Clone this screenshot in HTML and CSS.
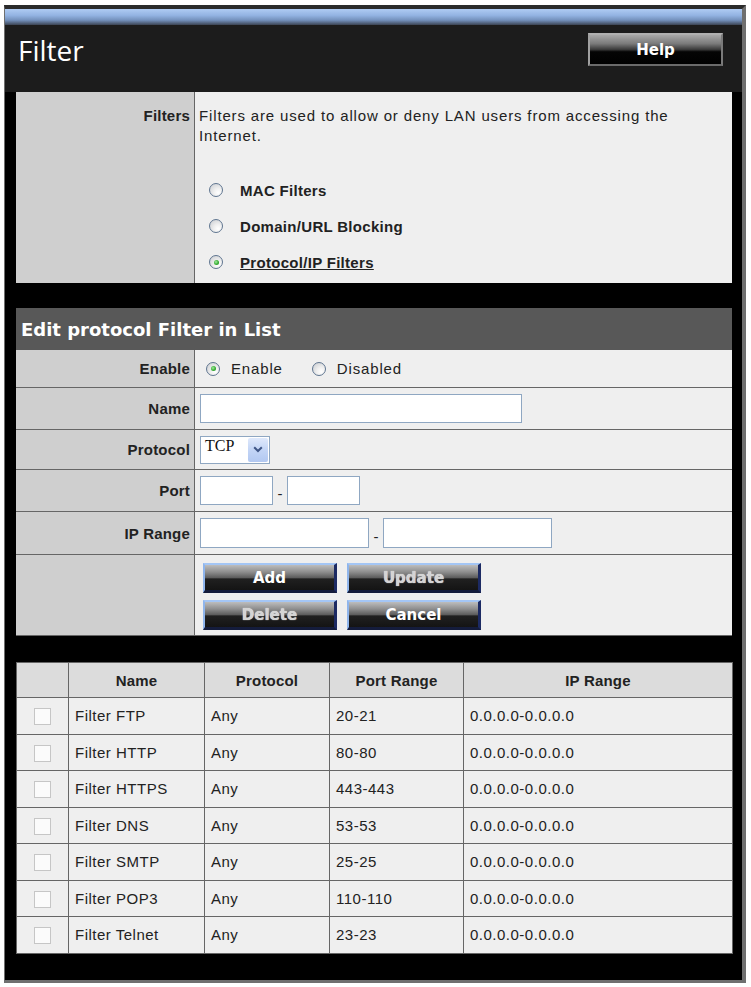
FILE: index.html
```html
<!DOCTYPE html>
<html lang="en">
<head>
<meta charset="utf-8">
<title>Filter</title>
<link rel="stylesheet" href="styles.css">
</head>
<body>
<div class="frame">
  <div class="topbar"></div>
  <div class="header">
    <h1 class="title">Filter</h1>
    <button class="help" type="button">Help</button>
  </div>
  <div class="content">
    <div class="panel">
      <div class="row row-filters">
        <div class="label label-top">Filters</div>
        <div class="value value-filters">
          <p class="desc">Filters are used to allow or deny LAN users from accessing the Internet.</p>
          <ul class="filter-list">
            <li class="radio-item"><span class="radio"></span><span class="opt">MAC Filters</span></li>
            <li class="radio-item"><span class="radio"></span><span class="opt">Domain/URL Blocking</span></li>
            <li class="radio-item"><span class="radio on"></span><a class="opt link" href="#">Protocol/IP Filters</a></li>
          </ul>
        </div>
      </div>
    </div>

    <div class="panel edit">
      <div class="heading">Edit protocol Filter in List</div>
      <div class="row row-enable">
        <div class="label">Enable</div>
        <div class="value">
          <label class="choice"><span class="radio on"></span>Enable</label>
          <label class="choice"><span class="radio"></span>Disabled</label>
        </div>
      </div>
      <div class="row row-name">
        <div class="label">Name</div>
        <div class="value"><input class="field w-name" type="text"></div>
      </div>
      <div class="row row-protocol">
        <div class="label">Protocol</div>
        <div class="value">
          <div class="select">
            <span class="select-text">TCP</span>
            <span class="select-btn">
              <svg width="10" height="7" viewBox="0 0 10 7"><path d="M1.2 1.2 L5 5 L8.8 1.2" fill="none" stroke="#3f5686" stroke-width="2"/></svg>
            </span>
          </div>
        </div>
      </div>
      <div class="row row-port">
        <div class="label">Port</div>
        <div class="value">
          <input class="field w-port" type="text"><span class="dash">-</span><input class="field w-port" type="text">
        </div>
      </div>
      <div class="row row-ip">
        <div class="label">IP Range</div>
        <div class="value">
          <input class="field w-ip" type="text"><span class="dash">-</span><input class="field w-ip" type="text">
        </div>
      </div>
      <div class="row row-buttons">
        <div class="label"></div>
        <div class="value buttons">
          <button class="btn" type="button">Add</button>
          <button class="btn btn-off" type="button">Update</button>
          <button class="btn btn-off" type="button">Delete</button>
          <button class="btn" type="button">Cancel</button>
        </div>
      </div>
    </div>

    <table class="list">
      <colgroup>
        <col class="c-check"><col class="c-name"><col class="c-proto"><col class="c-port"><col class="c-ip">
      </colgroup>
      <thead>
        <tr><th></th><th>Name</th><th>Protocol</th><th>Port Range</th><th>IP Range</th></tr>
      </thead>
      <tbody>
        <tr><td class="chk"><span class="checkbox"></span></td><td>Filter FTP</td><td>Any</td><td>20-21</td><td>0.0.0.0-0.0.0.0</td></tr>
        <tr><td class="chk"><span class="checkbox"></span></td><td>Filter HTTP</td><td>Any</td><td>80-80</td><td>0.0.0.0-0.0.0.0</td></tr>
        <tr><td class="chk"><span class="checkbox"></span></td><td>Filter HTTPS</td><td>Any</td><td>443-443</td><td>0.0.0.0-0.0.0.0</td></tr>
        <tr><td class="chk"><span class="checkbox"></span></td><td>Filter DNS</td><td>Any</td><td>53-53</td><td>0.0.0.0-0.0.0.0</td></tr>
        <tr><td class="chk"><span class="checkbox"></span></td><td>Filter SMTP</td><td>Any</td><td>25-25</td><td>0.0.0.0-0.0.0.0</td></tr>
        <tr><td class="chk"><span class="checkbox"></span></td><td>Filter POP3</td><td>Any</td><td>110-110</td><td>0.0.0.0-0.0.0.0</td></tr>
        <tr><td class="chk"><span class="checkbox"></span></td><td>Filter Telnet</td><td>Any</td><td>23-23</td><td>0.0.0.0-0.0.0.0</td></tr>
      </tbody>
    </table>
  </div>
</div>
</body>
</html>
```

FILE: styles.css
```css
html, body {
  margin: 0;
  padding: 0;
  background: #ffffff;
}

body {
  font-family: "Liberation Sans", Arial, sans-serif;
  font-size: 15px;
  color: #222;
}

.frame {
  box-sizing: border-box;
  width: 742px;
  height: 978px;
  margin: 5px 0 0 4px;
  border-left: 1px solid #6f6f6f;
  border-top: 4px solid #2b2b2b;
  border-right: 4px solid #6f6f6f;
  border-bottom: 3px solid #6f6f6f;
  background: #000;
}

.topbar {
  height: 16px;
  background: linear-gradient(to bottom, #afcbf3 0%, #93b3e2 40%, #7390bb 70%, #3c4453 100%);
}

.header {
  box-sizing: border-box;
  height: 67px;
  background: #1c1c1c;
  display: flex;
  justify-content: space-between;
  align-items: flex-start;
  padding: 8px 19px 0 13px;
}

.title {
  margin: 0;
  font-family: "Open Sans", "DejaVu Sans", sans-serif;
  font-weight: 400;
  font-size: 28px;
  line-height: 34px;
  color: #fff;
}

.help {
  box-sizing: border-box;
  width: 135px;
  height: 33px;
  margin: 0;
  padding: 0;
  border-style: solid;
  border-width: 2px;
  border-color: #b0b0b0 #7a7a7a #6a6a6a #a0a0a0;
  background: linear-gradient(to bottom, #a8a8a8 0%, #7a7a7a 30%, #3a3a3a 50%, #050505 58%, #000 100%);
  color: #fff;
  font-family: "DejaVu Sans", Verdana, sans-serif;
  font-weight: bold;
  font-size: 15px;
  cursor: pointer;
}

.content {
  padding: 0 10px 0 11px;
}

.panel {
  display: flex;
  flex-direction: column;
}

.row {
  box-sizing: border-box;
  display: grid;
  grid-template-columns: 179px 1fr;
  border-bottom: 1px solid #666;
}

.label {
  box-sizing: border-box;
  background: #cfcfcf;
  border-right: 1px solid #666;
  display: flex;
  align-items: center;
  justify-content: flex-end;
  padding-right: 4px;
  font-weight: bold;
  letter-spacing: 0.2px;
}

.label-top {
  align-items: flex-start;
  padding-top: 14px;
  line-height: 20px;
}

.value {
  background: #efefef;
  display: flex;
  align-items: center;
  padding-left: 5px;
  letter-spacing: 0.85px;
}

.row-filters { height: 191px; }
.value-filters {
  display: block;
  padding: 14px 0 3px 4px;
}

.desc {
  margin: 0;
  max-width: 510px;
  line-height: 20px;
}

.filter-list {
  list-style: none;
  margin: 26px 0 0;
  padding: 0;
}

.radio-item {
  display: flex;
  align-items: center;
  height: 36px;
  padding-left: 10px;
  gap: 17px;
  font-weight: bold;
  letter-spacing: 0.3px;
}

.link {
  color: #222;
  text-decoration: underline;
}

.radio {
  box-sizing: border-box;
  position: relative;
  display: inline-block;
  flex: none;
  width: 14px;
  height: 14px;
  border-radius: 50%;
  border: 1px solid #5f7590;
  background: radial-gradient(circle at 68% 72%, #ffffff 0%, #f0f0f0 35%, #d4d6d9 80%, #c4c7cb 100%);
}

.radio.on::after {
  content: "";
  position: absolute;
  left: 3.5px;
  top: 3.5px;
  width: 5px;
  height: 5px;
  border-radius: 50%;
  background: radial-gradient(circle at 40% 40%, #a4ec9f 0%, #36ad34 55%, #1a851a 100%);
}

.edit { margin-top: 25px; }

.heading {
  box-sizing: border-box;
  height: 42px;
  background: #585858;
  color: #fff;
  font-family: "DejaVu Sans", Verdana, sans-serif;
  font-weight: bold;
  font-size: 18px;
  line-height: 44px;
  padding-left: 5px;
  white-space: nowrap;
}

.row-enable { height: 38px; }
.row-name { height: 42px; }
.row-protocol { height: 40px; }
.row-port { height: 42px; }
.row-ip { height: 43px; }
.row-buttons { height: 81px; }

.choice {
  display: inline-flex;
  align-items: center;
  gap: 11px;
  margin-left: 6px;
}

.choice + .choice { margin-left: 29px; }

.field {
  box-sizing: border-box;
  margin: 0;
  padding: 0 3px;
  height: 29px;
  border: 1px solid #8fa7c2;
  background: #fff;
  font-family: "Liberation Sans", Arial, sans-serif;
  font-size: 15px;
}

.w-name { width: 322px; }
.w-port { width: 73px; }
.w-ip { width: 169px; height: 30px; }

.dash {
  display: inline-block;
  width: 14px;
  text-align: center;
  letter-spacing: 0;
  padding-top: 6px;
}

.select {
  box-sizing: border-box;
  display: flex;
  align-items: stretch;
  width: 70px;
  height: 28px;
  border: 1px solid #8fa7c2;
  background: #fff;
}

.select-text {
  flex: 1;
  font-family: "Liberation Serif", "Times New Roman", serif;
  font-size: 16px;
  line-height: 18px;
  padding-left: 4px;
  letter-spacing: 0;
  color: #111;
}

.select-btn {
  width: 20px;
  margin: 1px 1px 1px 0;
  border-radius: 2px;
  background: linear-gradient(to bottom, #dfe9fc 0%, #c3d5f6 50%, #b2c8f1 100%);
  display: flex;
  align-items: center;
  justify-content: center;
}

.buttons {
  display: grid;
  grid-template-columns: 134px 134px;
  grid-auto-rows: 30px;
  gap: 7px 10px;
  padding: 8px 0 0 8px;
  align-content: start;
}

.btn {
  box-sizing: border-box;
  width: 134px;
  height: 30px;
  margin: 0;
  padding: 0;
  border-style: solid;
  border-width: 2px 3px 3px 2px;
  border-color: #a4c6f5 #1c2a63 #141c3c #8fb5ec;
  background: linear-gradient(to bottom, #bdbdbd 0%, #8e8e8e 28%, #5e5e5e 50%, #202020 56%, #141414 100%);
  color: #fff;
  font-family: "DejaVu Sans", Verdana, sans-serif;
  font-weight: bold;
  font-size: 15px;
  letter-spacing: 0;
  cursor: pointer;
}

.btn-off {
  color: #d4d4d4;
  text-shadow: 0 0 1px #ffffff;
}

.list {
  margin-top: 26px;
  width: 716px;
  table-layout: fixed;
  border-collapse: collapse;
  border: 1px solid #666;
  background: #efefef;
  font-size: 15px;
  color: #222;
}

.c-check { width: 52px; }
.c-name { width: 136px; }
.c-proto { width: 125px; }
.c-port { width: 134px; }
.c-ip { width: 269px; }

.list th,
.list td {
  border: 1px solid #666;
  padding: 0 6px;
  vertical-align: middle;
}

.list th {
  height: 34px;
  background: #dcdcdc;
  font-weight: bold;
  text-align: center;
  letter-spacing: 0.2px;
}

.list td {
  height: 35.5px;
  text-align: left;
  letter-spacing: 0.5px;
}

.list td.chk {
  text-align: center;
  padding: 0;
}

.checkbox {
  display: inline-block;
  width: 17px;
  height: 17px;
  box-sizing: border-box;
  border: 1px solid #c6c6c6;
  background: #fbfbfb;
  vertical-align: middle;
}
```
